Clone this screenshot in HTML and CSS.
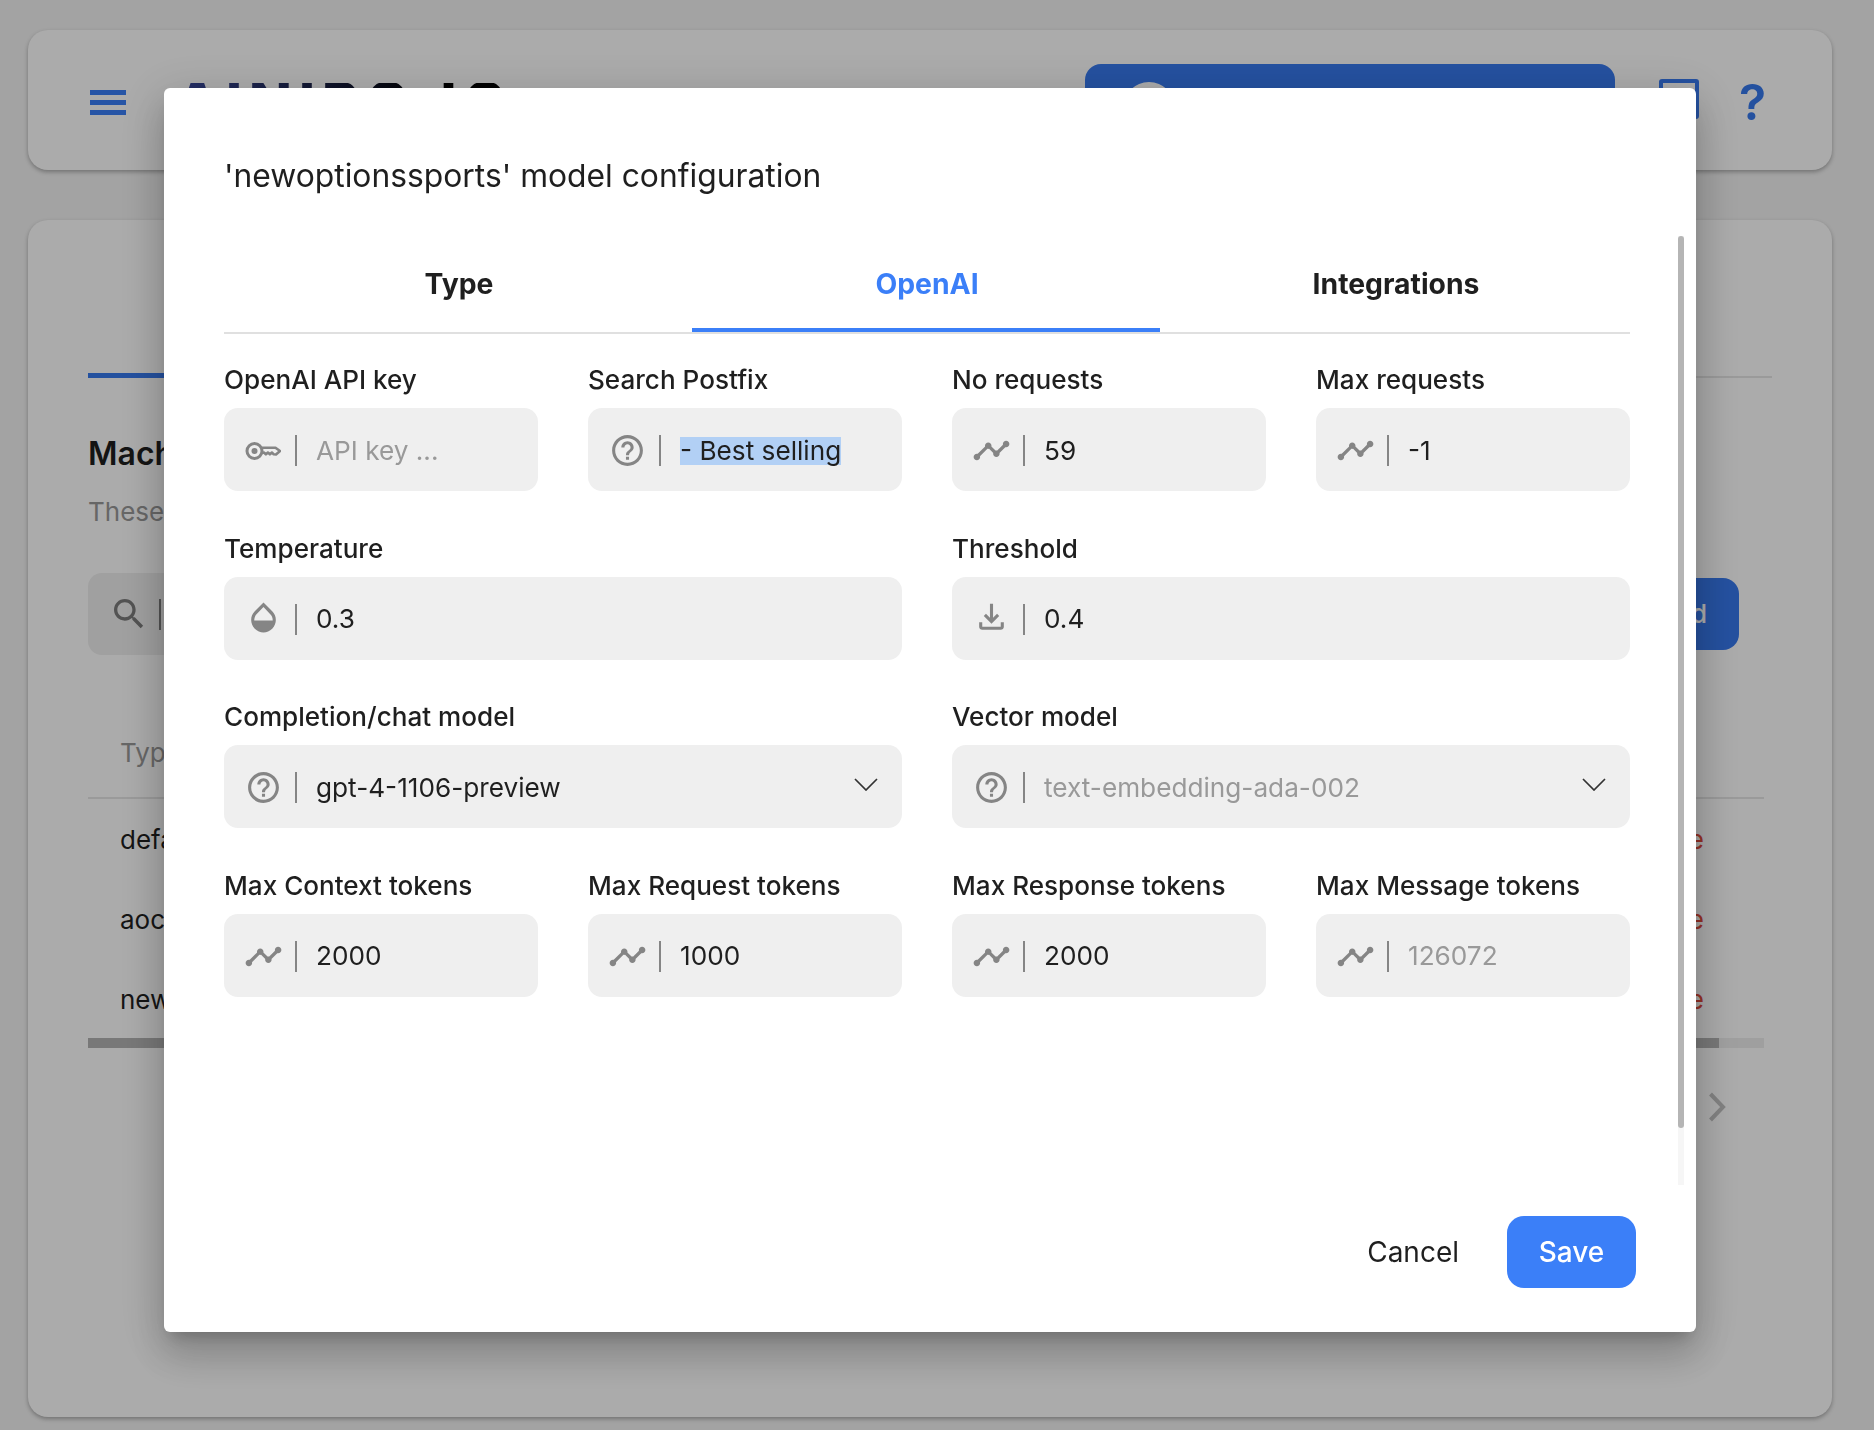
FILE: index.html
```html
<!DOCTYPE html>
<html lang="en">
<head>
<meta charset="utf-8">
<title>Model configuration</title>
<link rel="stylesheet" href="styles.css">
</head>
<body>
<svg class="defs" aria-hidden="true">
  <symbol id="i-line" viewBox="0 0 24 24"><path d="M23 8c0 1.1-.9 2-2 2-.18 0-.35-.02-.51-.07l-3.56 3.55c.05.16.07.34.07.52 0 1.1-.9 2-2 2s-2-.9-2-2c0-.18.02-.36.07-.52l-2.55-2.55c-.16.05-.34.07-.52.07s-.36-.02-.52-.07l-4.55 4.56c.05.16.07.33.07.51 0 1.1-.9 2-2 2s-2-.9-2-2 .9-2 2-2c.18 0 .35.02.51.07l4.56-4.55C8.02 9.36 8 9.18 8 9c0-1.1.9-2 2-2s2 .9 2 2c0 .18-.02.36-.07.52l2.55 2.55c.16-.05.34-.07.52-.07s.36.02.52.07l3.55-3.56C19.02 8.35 19 8.18 19 8c0-1.1.9-2 2-2s2 .9 2 2z"/></symbol>
  <symbol id="i-help" viewBox="0 0 24 24"><path d="M11 18h2v-2h-2v2zm1-16C6.48 2 2 6.48 2 12s4.48 10 10 10 10-4.48 10-10S17.52 2 12 2zm0 18c-4.41 0-8-3.59-8-8s3.59-8 8-8 8 3.59 8 8-3.59 8-8 8zm0-14c-2.21 0-4 1.79-4 4h2c0-1.1.9-2 2-2s2 .9 2 2c0 2-3 1.75-3 5h2c0-2.25 3-2.5 3-5 0-2.21-1.79-4-4-4z"/></symbol>
  <symbol id="i-chevron" viewBox="0 0 24 13"><path d="M1 1 12 12 23 1" fill="none" stroke="currentColor" stroke-width="1.700"/></symbol>
</svg>

<div class="page">
  <header class="card topbar">
    <div class="burger"><span></span><span></span><span></span></div>
    <div class="logo">AINIRO.IO</div>
    <div class="chatbtn"><span class="avatar"></span></div>
    <span class="topicon"></span>
    <span class="topq">?</span>
  </header>

  <main class="card maincard">
    <div class="mtabs"><div class="mtab">Models</div></div>
    <h2 class="mtitle">Machines</h2>
    <p class="msub">These are your machine learning models</p>
    <div class="searchrow">
      <div class="searchbox">
        <svg class="searchicon" viewBox="0 0 24 24"><path d="M15.500 14h-.79l-.28-.27C15.410 12.590 16 11.110 16 9.500 16 5.910 13.090 3 9.500 3S3 5.910 3 9.500 5.910 16 9.500 16c1.610 0 3.090-.59 4.230-1.570l.27.28v.79l5 4.990L20.490 19l-4.990-5zm-6 0C7.010 14 5 11.990 5 9.500S7.010 5 9.500 5 14 7.010 14 9.500 11.990 14 9.500 14z"/></svg>
        <span class="vsep"></span>
      </div>
      <div class="addbtn">Add</div>
    </div>
    <div class="table">
      <div class="thead">Type</div>
      <div class="trow"><span>default</span><span class="del">Delete</span></div>
      <div class="trow"><span>aoc</span><span class="del">Delete</span></div>
      <div class="trow"><span>newoptionssports</span><span class="del">Delete</span></div>
      <div class="tscroll"><div class="tthumb"></div></div>
    </div>
    <div class="pager">
      <svg class="pagericon" viewBox="0 0 18 30"><path d="M2.500 2 15 15 2.500 28" fill="none" stroke="currentColor" stroke-width="4"/></svg>
    </div>
  </main>
</div>

<div class="backdrop">
  <section class="modal">
    <h1 class="title">'newoptionssports' model configuration</h1>

    <nav class="tabs">
      <div class="tab">Type</div>
      <div class="tab active">OpenAI</div>
      <div class="tab">Integrations</div>
    </nav>

    <div class="form">
      <div class="field">
        <label class="label">OpenAI API key</label>
        <div class="input">
          <svg class="icon key" viewBox="0 0 36 20"><circle cx="9.500" cy="10" r="7.500" fill="none" stroke="currentColor" stroke-width="3"/><circle cx="9.500" cy="10" r="3"/><path d="M16.500 6.800H30.500L35 10l-4 3.500-2.300-.2-1.800-1.800-2 1.900-2-1.900-2 1.900-2-1.900-2.400.4" fill="none" stroke="currentColor" stroke-width="2.600" stroke-linejoin="round"/></svg>
          <span class="vsep"></span>
          <span class="value placeholder">API key ...</span>
        </div>
      </div>
      <div class="field">
        <label class="label">Search Postfix</label>
        <div class="input">
          <svg class="icon help"><use href="#i-help"/></svg>
          <span class="vsep"></span>
          <span class="value"><span class="selected">- Best selling</span></span>
        </div>
      </div>
      <div class="field">
        <label class="label">No requests</label>
        <div class="input">
          <svg class="icon line"><use href="#i-line"/></svg>
          <span class="vsep"></span>
          <span class="value">59</span>
        </div>
      </div>
      <div class="field">
        <label class="label">Max requests</label>
        <div class="input">
          <svg class="icon line"><use href="#i-line"/></svg>
          <span class="vsep"></span>
          <span class="value">-1</span>
        </div>
      </div>

      <div class="field wide">
        <label class="label">Temperature</label>
        <div class="input">
          <svg class="icon tall" viewBox="0 0 24 24"><path d="M17.660 8 12 2.350 6.340 8C4.780 9.560 4 11.640 4 13.640s.78 4.110 2.340 5.670 3.610 2.350 5.660 2.350 4.100-.79 5.660-2.350S20 15.640 20 13.640 19.220 9.560 17.660 8zM6 14c.01-2 .62-3.270 1.760-4.400L12 5.270l4.240 4.380C17.380 10.770 17.990 12 18 14H6z"/></svg>
          <span class="vsep"></span>
          <span class="value">0.3</span>
        </div>
      </div>
      <div class="field wide">
        <label class="label">Threshold</label>
        <div class="input">
          <svg class="icon tall" viewBox="0 0 24 24"><path d="M18 15v3H6v-3H4v3c0 1.100.9 2 2 2h12c1.100 0 2-.9 2-2v-3h-2zm-1-4-1.410-1.410L13 12.170V3h-2v9.170L8.410 9.590 7 11l5 5 5-5z"/></svg>
          <span class="vsep"></span>
          <span class="value">0.4</span>
        </div>
      </div>

      <div class="field wide">
        <label class="label">Completion/chat model</label>
        <div class="input">
          <svg class="icon help"><use href="#i-help"/></svg>
          <span class="vsep"></span>
          <span class="value">gpt-4-1106-preview</span>
          <svg class="chevron"><use href="#i-chevron"/></svg>
        </div>
      </div>
      <div class="field wide">
        <label class="label">Vector model</label>
        <div class="input">
          <svg class="icon help"><use href="#i-help"/></svg>
          <span class="vsep"></span>
          <span class="value placeholder">text-embedding-ada-002</span>
          <svg class="chevron"><use href="#i-chevron"/></svg>
        </div>
      </div>

      <div class="field">
        <label class="label">Max Context tokens</label>
        <div class="input">
          <svg class="icon line"><use href="#i-line"/></svg>
          <span class="vsep"></span>
          <span class="value">2000</span>
        </div>
      </div>
      <div class="field">
        <label class="label">Max Request tokens</label>
        <div class="input">
          <svg class="icon line"><use href="#i-line"/></svg>
          <span class="vsep"></span>
          <span class="value">1000</span>
        </div>
      </div>
      <div class="field">
        <label class="label">Max Response tokens</label>
        <div class="input">
          <svg class="icon line"><use href="#i-line"/></svg>
          <span class="vsep"></span>
          <span class="value">2000</span>
        </div>
      </div>
      <div class="field">
        <label class="label">Max Message tokens</label>
        <div class="input">
          <svg class="icon line"><use href="#i-line"/></svg>
          <span class="vsep"></span>
          <span class="value placeholder">126072</span>
        </div>
      </div>
    </div>

    <div class="scrollbar"><div class="thumb"></div></div>

    <footer class="actions">
      <button class="btn cancel">Cancel</button>
      <button class="btn save">Save</button>
    </footer>
  </section>
</div>
</body>
</html>
```

FILE: styles.css
```css
* { box-sizing: border-box; }
html, body { margin: 0; height: 100%; }
body {
  background: #f3f3f3;
  font-family: Inter, "Liberation Sans", sans-serif;
  color: #1f1f1f;
  overflow: hidden;
}
.defs { display: none; }

/* page behind the dialog */
.page { padding: 30px 42px 0 28px; }
.card {
  background: #fff;
  border-radius: 20px;
  box-shadow: 0 2px 4px rgba(0, 0, 0, .3);
}
.topbar {
  height: 140px;
  display: flex;
  align-items: center;
  padding-left: 62px;
}
.burger { width: 36px; display: flex; flex-direction: column; gap: 5px; margin-top: 4px; }
.burger span { height: 5px; background: #3b7ff8; }
.logo {
  margin: 6px 0 0 50px;
  font-size: 56px;
  font-weight: 800;
  letter-spacing: 7px;
  line-height: 40px;
  background: linear-gradient(90deg, #3a4aa0, #000 75%);
  -webkit-background-clip: text;
  background-clip: text;
  color: transparent;
}
.chatbtn {
  margin-left: auto;
  width: 530px;
  height: 72px;
  background: #3779ee;
  border-radius: 16px;
  padding: 18px 0 0 38px;
}
.avatar { display: block; width: 52px; height: 52px; border-radius: 50%; background: #fff; }
.topicon {
  width: 40px;
  height: 40px;
  margin-left: 44px;
  border: 4px solid #3779ee;
  border-radius: 3px;
  margin-top: -2px;
}
.topq {
  width: 24px;
  margin: 4px 69px 0 40px;
  font-size: 50px;
  font-weight: 600;
  line-height: 44px;
  color: #3779ee;
}
.maincard { margin-top: 50px; height: 1197px; padding: 0 60px; }
.mtabs { height: 158px; display: flex; align-items: flex-end; border-bottom: 2px solid #e6e6e6; }
.mtab {
  width: 300px;
  height: 60px;
  margin-bottom: -2px;
  border-bottom: 5px solid #3779ee;
  text-align: center;
  font-size: 26px;
  font-weight: 600;
  line-height: 32px;
}
.mtitle { margin: 55px 0 0; font-size: 32px; font-weight: 600; line-height: 42px; }
.msub { margin: 22px 0 0; font-size: 26px; line-height: 30px; color: #999; }
.searchrow { display: flex; align-items: center; margin-top: 46px; padding-right: 33px; justify-content: space-between; }
.searchbox {
  width: 1400px;
  height: 82px;
  background: #efefef;
  border-radius: 14px;
  display: flex;
  align-items: center;
  padding-left: 21px;
}
.searchicon { width: 40px; height: 40px; fill: #7c7c7c; }
.searchbox .vsep { margin-left: 10px; background: #7c7c7c; }
.addbtn {
  width: 140px;
  height: 72px;
  background: #3779ee;
  border-radius: 16px;
  color: #fff;
  font-size: 26px;
  font-weight: 500;
  line-height: 72px;
  text-align: right;
  padding-right: 32px;
}
.table { width: 1676px; margin-top: 53px; font-size: 26px; }
.thead {
  height: 91px;
  padding-left: 32px;
  line-height: 90px;
  color: #999;
  border-bottom: 2px solid #e6e6e6;
}
.trow {
  height: 80px;
  padding: 0 60px 0 32px;
  display: flex;
  align-items: center;
  justify-content: space-between;
}
.del { color: #e04a3a; }
.tscroll { height: 10px; margin-top: -1px; background: #eee; }
.tthumb { width: 1631px; height: 100%; background: #b4b4b4; }
.pager { width: 1676px; margin-top: 44px; padding-right: 38px; display: flex; justify-content: flex-end; }
.pagericon { width: 18px; height: 30px; color: #c2c2c2; }

/* dialog */
.backdrop {
  position: fixed;
  inset: 0;
  background: rgba(0, 0, 0, .33);
  padding: 88px 0 0 164px;
}
.modal {
  position: relative;
  width: 1532px;
  height: 1244px;
  background: #fff;
  border-radius: 6px;
  padding: 66px 66px 44px 60px;
  display: flex;
  flex-direction: column;
  box-shadow: 0 11px 15px -7px rgba(0, 0, 0, .2), 0 24px 38px 3px rgba(0, 0, 0, .14), 0 9px 46px 8px rgba(0, 0, 0, .12);
}
.title { margin: 0; font-size: 31.800px; font-weight: 400; line-height: 44px; }
.tabs {
  margin-top: 36px;
  display: grid;
  grid-template-columns: 468px 468px 1fr;
  border-bottom: 2px solid #e0e0e0;
}
.tab {
  height: 98px;
  padding: 5px 0 0 2px;
  border-bottom: 4px solid transparent;
  display: flex;
  align-items: center;
  justify-content: center;
  font-size: 28.300px;
  font-weight: 650;
}
.tab.active { color: #3b7ff8; border-bottom-color: #3b7ff8; }
.form {
  margin-top: 27px;
  display: grid;
  grid-template-columns: repeat(4, 314px);
  column-gap: 50px;
  row-gap: 38.500px;
}
.field.wide { grid-column: span 2; }
.label { display: block; height: 38px; font-size: 26.100px; font-weight: 500; line-height: 38px; margin-bottom: 9px; }
.input {
  height: 83px;
  background: #efefef;
  border-radius: 14px;
  display: flex;
  align-items: center;
  padding: 2px 24px 0 0;
  font-size: 26.200px;
}
.icon { flex: none; fill: #858585; color: #858585; }
.icon.help { width: 37px; height: 37px; margin: 0 13px 0 21px; }
.icon.tall { width: 37px; height: 37px; margin: -4px 13px 0 21px; }
.icon.line { width: 39px; height: 39px; margin: 0 12px 0 20px; }
.icon.key { width: 36px; height: 20px; margin: 0 14px 0 21px; }
.vsep { flex: none; width: 2px; height: 31px; background: #858585; }
.value { margin-left: 19px; line-height: 28px; }
.placeholder { color: #999; }
.selected { background: #b2d0f5; display: inline-block; }
.chevron { margin-left: auto; width: 24px; height: 13px; color: #333; margin-top: -6px; }
.scrollbar {
  position: absolute;
  top: 148px;
  right: 12px;
  width: 6px;
  height: 949px;
  background: #f6f6f6;
}
.thumb { height: 892px; background: #b5b5b5; border-radius: 3px; }
.actions {
  margin-top: auto;
  display: flex;
  justify-content: flex-end;
  gap: 24px;
  margin-right: -6px;
}
.btn {
  height: 72px;
  border: 0;
  background: none;
  font-family: inherit;
  font-size: 28px;
  color: #1f1f1f;
  padding: 0 24px;
}
.btn.save { width: 129px; padding: 0; background: #3b7ff8; color: #fff; border-radius: 17px; font-weight: 500; }
```
